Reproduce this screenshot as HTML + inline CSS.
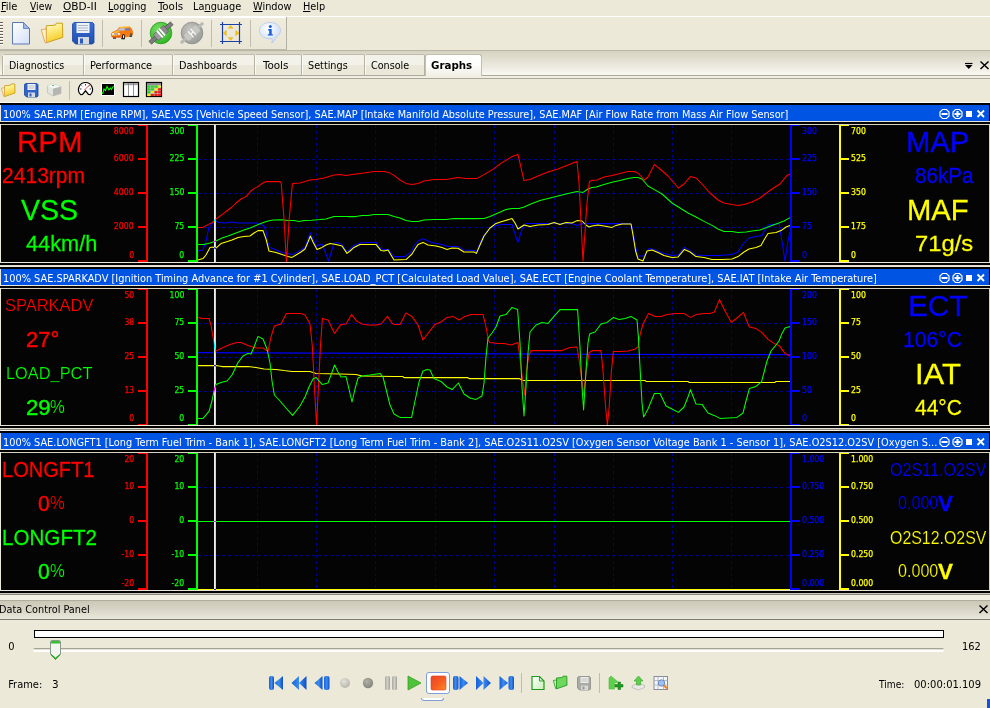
<!DOCTYPE html>
<html><head><meta charset="utf-8"><title>OBD Graphs</title>
<style>
html,body{margin:0;padding:0}
body{width:990px;height:708px;overflow:hidden;background:#ece9d8;position:relative;
 font-family:"DejaVu Sans Condensed","Liberation Sans",sans-serif;font-size:11px;color:#000;line-height:13px}
div,span,svg{position:absolute;box-sizing:border-box}
.t{white-space:nowrap;transform-origin:0 0}
u{text-decoration:underline;text-underline-offset:1px}
.red{color:#f00}.grn{color:#0f0}.blu{color:#00f}.yel{color:#ff0}
.big{white-space:nowrap;font-family:"Liberation Sans",sans-serif;transform-origin:0 0}
.ax{font-family:"DejaVu Sans Condensed","Liberation Sans",sans-serif;font-size:9px;line-height:10px;white-space:nowrap;transform:scaleX(.96);-webkit-text-stroke:.25px currentColor}
.axr{transform-origin:100% 0}.axl{transform-origin:0 0}
</style></head>
<body>
<span class="t" style="left:0.90px;top:0px;transform:scaleX(1.0000);"><u>F</u>ile</span>
<span class="t" style="left:29.88px;top:0px;transform:scaleX(0.9355);"><u>V</u>iew</span>
<span class="t" style="left:63.37px;top:0px;transform:scaleX(1.0678);"><u>O</u>BD-II</span>
<span class="t" style="left:107.62px;top:0px;transform:scaleX(0.9793);"><u>L</u>ogging</span>
<span class="t" style="left:157.80px;top:0px;transform:scaleX(1.0370);"><u>T</u>ools</span>
<span class="t" style="left:193.41px;top:0px;transform:scaleX(0.9879);">La<u>n</u>guage</span>
<span class="t" style="left:253.43px;top:0px;transform:scaleX(0.9862);"><u>W</u>indow</span>
<span class="t" style="left:302.51px;top:0px;transform:scaleX(0.9857);"><u>H</u>elp</span>
<div style="left:0;top:16px;width:990px;height:1px;background:#fff"></div>
<div style="left:0;top:17px;width:286px;height:1px;background:#fff"></div>
<div id="tb" style="left:0;top:18px;width:286px;height:31px;background:linear-gradient(#efecde,#e9e6d6)"></div>
<div style="left:286px;top:17px;width:1px;height:33px;background:#b3b0a1"></div>
<div style="left:0;top:49px;width:287px;height:1px;background:#bebbac"></div>
<div style="left:0;top:22px;width:3px;height:23px;background:repeating-linear-gradient(#6b5d4f 0 1px,#fff 1px 2px,#ece9d8 2px 3px)"></div>
<div style="left:102px;top:20px;width:1px;height:27px;background:#c0bdae"></div>
<div style="left:141px;top:20px;width:1px;height:27px;background:#c0bdae"></div>
<div style="left:211px;top:20px;width:1px;height:27px;background:#c0bdae"></div>
<div style="left:250px;top:20px;width:1px;height:27px;background:#c0bdae"></div>
<svg style="left:0;top:18px" width="290" height="31" viewBox="0 18 290 31"><defs><linearGradient id="pg" x1="0" y1="0" x2="1" y2="1"><stop offset="0" stop-color="#fff"/><stop offset="1" stop-color="#d3dff9"/></linearGradient><linearGradient id="fo" x1="0" y1="0" x2=".3" y2="1"><stop offset="0" stop-color="#fffcd8"/><stop offset=".5" stop-color="#fbe873"/><stop offset="1" stop-color="#f6cc28"/></linearGradient><linearGradient id="fl" x1="0" y1="0" x2="0" y2="1"><stop offset="0" stop-color="#3a6fd6"/><stop offset="1" stop-color="#1f4fb0"/></linearGradient><radialGradient id="gc" cx=".4" cy=".35" r=".7"><stop offset="0" stop-color="#7be067"/><stop offset="1" stop-color="#2fb324"/></radialGradient><radialGradient id="gg" cx=".4" cy=".35" r=".7"><stop offset="0" stop-color="#c4c4c0"/><stop offset="1" stop-color="#9a9a96"/></radialGradient><radialGradient id="ib" cx=".4" cy=".3" r=".8"><stop offset="0" stop-color="#fff"/><stop offset="1" stop-color="#c5d6f4"/></radialGradient></defs><path d="M12.5 22.5h11l6 6v15.5h-17z" fill="url(#pg)" stroke="#5a78b8" stroke-width="1"/><path d="M23.5 22.5v6h6z" fill="#9db6ea" stroke="#5a78b8" stroke-width=".8"/><path d="M46.300 25.800l9.100-.700 1-1.900h6.100l.300 14.200-17.100 5.500z" fill="url(#fo)" stroke="#c9a21e" stroke-width="1"/><path d="M41.200 29.600l5.100-.600v13.900l-1.300-.300z" fill="#fdf3c4" stroke="#e0a24e" stroke-width=".9"/><path d="M74 22.500h18.500l1.500 1.500v18.500l-1.500 1.500h-17l-3-3v-17z" fill="url(#fl)" stroke="#1a45a0" stroke-width=".8"/><rect x="76.500" y="23" width="13" height="10" fill="#eef1f6"/><path d="M78 25.500h10M78 28h10M78 30.500h10" stroke="#a9b4c6" stroke-width="1"/><rect x="78" y="37" width="11" height="7" fill="#d5d9e0"/><rect x="80" y="38.500" width="3" height="5" fill="#2a5cc0"/><path d="M111.100 33.600l1.300-1.700 4.800-2.100 2-2.900 10.500-.500 2.400 2.800 1 3-.300 2.700-1.700 1.400-6.100 1.300h-12.200l-1.700-1.300z" fill="#f57a14"/><path d="M117.400 30.500l2.300-2.200h5.100l-.500 2.200z" fill="#b4c8f2"/><path d="M125.500 28.500l4.700-.100-.500 1.800-3.900.400z" fill="#5a80cc"/><path d="M119.600 27.300l9.800-.400" stroke="#ffd840" stroke-width="1"/><path d="M112.800 32.200l4.400-1 3 .500-4 1z" fill="#ffe040"/><rect x="112.100" y="33.200" width="7.800" height="1.500" fill="#b4b4bc"/><rect x="112.100" y="33.200" width="1.800" height="1.500" fill="#fff"/><rect x="118.100" y="33.200" width="1.800" height="1.500" fill="#fff"/><path d="M112.300 35.500h5" stroke="#ffd840" stroke-width=".8" stroke-dasharray="1 .7"/><path d="M111.500 36l13.500 .600v1h-12.200z" fill="#e85a0c"/><ellipse cx="123.500" cy="36.600" rx="1.500" ry="2.700" fill="#111"/><ellipse cx="123.600" cy="36.500" rx=".6" ry="1.500" fill="#fff"/><ellipse cx="131.100" cy="34.900" rx="1.200" ry="2" fill="#555"/><rect x="113" y="37.600" width="3" height="1.100" fill="#222"/><rect x="121" y="38.200" width="4" height="1" fill="#222"/><rect x="129.300" y="36.300" width="2.500" height=".700" fill="#222"/><circle cx="161" cy="33" r="10.800" fill="url(#gc)" stroke="#2a9a20" stroke-width=".8"/><g transform="rotate(-42 161 33)"><rect x="146.500" y="31" width="9" height="4" fill="#7c7c7c" stroke="#4a4a4a" stroke-width=".6"/><rect x="166.500" y="31" width="9" height="4" fill="#7c7c7c" stroke="#4a4a4a" stroke-width=".6"/><rect x="154" y="29" width="6.500" height="8" rx="1.500" fill="#9c9c9c" stroke="#555" stroke-width=".6"/><rect x="161.500" y="29" width="6.500" height="8" rx="1.500" fill="#8c8c8c" stroke="#555" stroke-width=".6"/><rect x="158.500" y="28.500" width="1.800" height="9" fill="#fff"/><rect x="161.500" y="28.500" width="1.800" height="9" fill="#fff"/></g><circle cx="192" cy="33" r="10.800" fill="url(#gg)" stroke="#8c8c88" stroke-width=".8"/><g transform="rotate(-42 192 33)"><rect x="177" y="31.500" width="9" height="3" fill="#b9b9b5"/><rect x="198" y="31.500" width="9" height="3" fill="#b9b9b5"/><rect x="184" y="29" width="5" height="8" rx="1.500" fill="#c8c8c4"/><rect x="195" y="29" width="5" height="8" rx="1.500" fill="#c8c8c4"/><rect x="189.500" y="29" width="1.500" height="8" fill="#f4f4f2"/><rect x="193" y="29" width="1.500" height="8" fill="#f4f4f2"/><rect x="190" y="32.300" width="4" height="1.400" fill="#f4f4f2"/></g><path d="M220 24.500h22M220 41.500h22M222.500 22v22M239.500 22v22" stroke="#1c3fa8" stroke-width="1.200" fill="none"/><path d="M228.300 28.300h4.700l-2.400-3zM228.300 37.600h4.700l-2.400 3zM226.300 30.400v5.400l-3.300-2.700zM235.800 30.400v5.400l3.200-2.700z" fill="#f5c518" stroke="#d9a400" stroke-width=".4"/><path d="M270 22.500c6 0 10.500 3.300 10.500 8 0 3-2 5.500-5 7 0 2-1.500 4.500-4 5.500 1-1.500 1-3 .5-4.500-1 .200-1.500 .200-2 .200-6 0-10.500-3.500-10.500-8.200s4.500-8 10.500-8z" fill="url(#ib)" stroke="#b4c6e8" stroke-width=".8"/><circle cx="270.300" cy="26.400" r="1.500" fill="#1460d8"/><path d="M268.200 29h3.500v5.200h1.100v1.400h-5v-1.400h1.400v-3.800h-1z" fill="#1460d8"/></svg>
<div style="left:0;top:50px;width:990px;height:1px;background:#b9b6a6"></div>
<div style="left:0;top:51px;width:990px;height:24px;background:linear-gradient(#d6d3c2,#e6e3d6 45%,#f8f7f2)"></div>
<div style="left:0;top:75px;width:990px;height:1px;background:#aba899"></div>
<div style="left:0;top:76px;width:990px;height:2px;background:#f1efe4"></div>
<div style="left:0;top:78px;width:990px;height:1px;background:#aca899"></div>
<div style="left:2px;top:56px;width:1px;height:19px;background:#b5b2a2"></div>
<div style="left:3px;top:54px;width:81px;height:21px;border-top:1px solid #c0bdac;border-right:1px solid #b5b2a2;border-left:1px solid #fbfbf6;border-radius:2px 2px 0 0;background:linear-gradient(#f3f2e9 0 48%,#ebe8da 52%)"></div>
<span class="t" style="left:8.54px;top:59px;transform:scaleX(0.9593);">Diagnostics</span>
<div style="left:84px;top:54px;width:89px;height:21px;border-top:1px solid #c0bdac;border-right:1px solid #b5b2a2;border-left:1px solid #fbfbf6;border-radius:2px 2px 0 0;background:linear-gradient(#f3f2e9 0 48%,#ebe8da 52%)"></div>
<span class="t" style="left:89.51px;top:59px;transform:scaleX(0.9914);">Performance</span>
<div style="left:173px;top:54px;width:82px;height:21px;border-top:1px solid #c0bdac;border-right:1px solid #b5b2a2;border-left:1px solid #fbfbf6;border-radius:2px 2px 0 0;background:linear-gradient(#f3f2e9 0 48%,#ebe8da 52%)"></div>
<span class="t" style="left:178.71px;top:59px;transform:scaleX(0.9852);">Dashboards</span>
<div style="left:255px;top:54px;width:47px;height:21px;border-top:1px solid #c0bdac;border-right:1px solid #b5b2a2;border-left:1px solid #fbfbf6;border-radius:2px 2px 0 0;background:linear-gradient(#f3f2e9 0 48%,#ebe8da 52%)"></div>
<span class="t" style="left:262.60px;top:59px;transform:scaleX(1.0497);">Tools</span>
<div style="left:302px;top:54px;width:63px;height:21px;border-top:1px solid #c0bdac;border-right:1px solid #b5b2a2;border-left:1px solid #fbfbf6;border-radius:2px 2px 0 0;background:linear-gradient(#f3f2e9 0 48%,#ebe8da 52%)"></div>
<span class="t" style="left:307.99px;top:59px;transform:scaleX(0.9772);">Settings</span>
<div style="left:365px;top:54px;width:60px;height:21px;border-top:1px solid #c0bdac;border-right:1px solid #b5b2a2;border-left:1px solid #fbfbf6;border-radius:2px 2px 0 0;background:linear-gradient(#f3f2e9 0 48%,#ebe8da 52%)"></div>
<span class="t" style="left:371.21px;top:59px;transform:scaleX(0.9720);">Console</span>
<div style="left:425px;top:54px;width:57px;height:22px;border:1px solid #c2bfae;border-bottom:none;border-radius:3px 3px 0 0;background:linear-gradient(#fff,#fdfdfb 45%,#f1efe4)"></div>
<span class="t" style="left:431.48px;top:59px;transform:scaleX(1.0356);font-weight:bold;">Graphs</span>
<svg style="left:960px;top:58px" width="30" height="14" viewBox="960 58 30 14"><path d="M965 63.500h7.500" stroke="#000" stroke-width="1.200"/><path d="M965 65h7.500l-3.750 4z" fill="#000"/><path d="M980.500 61.500l8 7.500M988.500 61.500l-8 7.500" stroke="#000" stroke-width="1.500" fill="none"/></svg>
<div style="left:69px;top:81px;width:1px;height:19px;background:#c0bdae"></div>
<svg style="left:0;top:80px" width="170" height="20" viewBox="0 80 170 20"><path d="M4.500 85.800l5.800-.500.700-1.300h3.800l.200 9-10.500 3.600z" fill="url(#fo)" stroke="#c9a21e" stroke-width=".9"/><path d="M1.300 88.200l3.200-.400v8.800l-.800-.200z" fill="#fdf3c4" stroke="#e0a24e" stroke-width=".8"/><path d="M25.500 83.500h11.500l1 1v11.500l-1 1h-10.500l-2-2v-10.500z" fill="#2f62cc" stroke="#1a45a0" stroke-width=".8"/><rect x="27.500" y="84" width="8" height="6" fill="#eef1f6"/><path d="M28.500 86h6M28.500 88h6" stroke="#a9b4c6" stroke-width=".8"/><rect x="28" y="92.500" width="7" height="4.500" fill="#d5d9e0"/><rect x="29.500" y="93.500" width="2" height="3" fill="#2a5cc0"/><path d="M47.500 86l5-2 8.500 2.500v7l-8 2.500-5.500-3z" fill="#e4e4e0" stroke="#c0c0bc" stroke-width=".8"/><path d="M53 88.500l8-2v7l-8 2.500z" fill="#b5b5b1"/><path d="M47.500 86l5.500 2.500 8-2-8.500-2.500z" fill="#f6f6f4"/><rect x="52" y="85" width="2" height="1" fill="#5c6"/><path d="M85.500 82.500a7 7 0 0 1 4.800 12.100l-1.800-.100-3-3.700-3 3.700-1.800.100a7 7 0 0 1 4.800-12.100z" fill="#fff" stroke="#000" stroke-width="1.200"/><path d="M80 89h1.500M85.500 84v1.500M89.500 85.500l-.8.800M81.500 85.500l.8.800M91 89h-1.500" stroke="#000" stroke-width=".8"/><path d="M84.500 90l5.500-5.500" stroke="#f03020" stroke-width=".9"/><rect x="101" y="83" width="14" height="13" fill="#fff"/><rect x="102" y="84" width="12" height="11" fill="#000"/><path d="M102.500 94l1.500-5 1.500 1.500 1.500-4 2 3.500 1.500-2 1 1.500 2-3.500" stroke="#0f0" stroke-width="1.100" fill="none"/><rect x="123.500" y="82.500" width="15" height="14" fill="#fff" stroke="#000" stroke-width="1.200"/><rect x="124" y="83" width="14" height="2.200" fill="#a4a4a4"/><path d="M128.500 83v13M133.500 83v13" stroke="#777" stroke-width=".8"/><rect x="146.500" y="82.500" width="15" height="14" fill="#bbb" stroke="#000" stroke-width="1.200"/><rect x="147" y="83" width="14" height="2" fill="#8a8a90"/><rect x="147.3" y="85.5" width="3" height="2.200" fill="#1fdc1f"/><rect x="150.9" y="85.5" width="3" height="2.200" fill="#1fdc1f"/><rect x="154.5" y="85.5" width="3" height="2.200" fill="#1fdc1f"/><rect x="158.1" y="85.5" width="3" height="2.200" fill="#f7ee10"/><rect x="147.3" y="88.3" width="3" height="2.200" fill="#1fdc1f"/><rect x="150.9" y="88.3" width="3" height="2.200" fill="#1fdc1f"/><rect x="154.5" y="88.3" width="3" height="2.200" fill="#f7ee10"/><rect x="158.1" y="88.3" width="3" height="2.200" fill="#f01818"/><rect x="147.3" y="91.1" width="3" height="2.200" fill="#1fdc1f"/><rect x="150.9" y="91.1" width="3" height="2.200" fill="#f7ee10"/><rect x="154.5" y="91.1" width="3" height="2.200" fill="#f01818"/><rect x="158.1" y="91.1" width="3" height="2.200" fill="#f01818"/><rect x="147.3" y="93.9" width="3" height="2.200" fill="#f7ee10"/><rect x="150.9" y="93.9" width="3" height="2.200" fill="#f01818"/><rect x="154.5" y="93.9" width="3" height="2.200" fill="#f01818"/><rect x="158.1" y="93.9" width="3" height="2.200" fill="#f01818"/></svg>
<div style="left:0;top:102px;width:990px;height:1px;background:#fbfaf4"></div>
<div style="left:0;top:103px;width:990px;height:2px;background:#000"></div>
<div style="left:1px;top:105px;width:988px;height:16px;background:#0054e3"></div>
<div style="left:989px;top:105px;width:1px;height:16px;background:#000"></div>
<span class="t" style="left:2.89px;top:108px;transform:scaleX(0.9832);color:#fff;">100% SAE.RPM [Engine RPM], SAE.VSS [Vehicle Speed Sensor], SAE.MAP [Intake Manifold Absolute Pressure], SAE.MAF [Air Flow Rate from Mass Air Flow Sensor]</span>
<svg style="left:936px;top:105px" width="52" height="16" viewBox="0 0 52 16"><g fill="none" stroke="#fff" stroke-width="1.2"><path d="M6.5 4.5h4l2.5 2.5v4l-2.5 2.5h-4l-2.5-2.5v-4z"/><path d="M19.5 4.5h4l2.5 2.5v4l-2.5 2.5h-4l-2.5-2.5v-4z"/></g><g fill="#fff"><rect x="5.5" y="8" width="6" height="2"/><rect x="18.5" y="8" width="6" height="2"/><rect x="20.5" y="6" width="2" height="6"/><rect x="30" y="6" width="6" height="6"/></g><path d="M41.5 5.5l6.5 6.5M48 5.5l-6.5 6.5" stroke="#fff" stroke-width="1.8" fill="none"/></svg>
<div style="left:0;top:121px;width:990px;height:1px;background:#e8e5d6"></div>
<div style="left:0;top:122px;width:990px;height:2px;background:#000"></div>
<div style="left:1px;top:124px;width:989px;height:1px;background:#d6d2c0"></div>
<div style="left:1px;top:125px;width:988px;height:137px;background:#040404"></div>
<div style="left:989px;top:125px;width:1px;height:137px;background:#d6d2c0"></div>
<div style="left:0;top:262px;width:990px;height:1px;background:#e8e5d6"></div>
<div style="left:0;top:263px;width:990px;height:2px;background:#000"></div>
<div style="left:0;top:265px;width:990px;height:2px;background:linear-gradient(#d6d2c0,#f4f2e8)"></div>
<svg style="left:1px;top:125px" width="988" height="137" viewBox="1 125 988 137" shape-rendering="crispEdges"><path d="M257.5 125V262M316.5 125V262M375.5 125V262M435.5 125V262M494.5 125V262M554.5 125V262M613.5 125V262M672.5 125V262M731.5 125V262M198 159.5H790M198 193.5H790M198 227.5H790" stroke="#000088" stroke-width="1" stroke-dasharray="3 3" fill="none"/><path d="M147 125V262M138 125H146M138 159H146M138 193H146M138 227H146M138 261H146" stroke="#f00" stroke-width="2" fill="none"/><path d="M197 125V262M188 125H196M188 159H196M188 193H196M188 227H196M188 261H196" stroke="#0f0" stroke-width="2" fill="none"/><path d="M791 125V262M792 125H800M792 159H800M792 193H800M792 227H800M792 261H800" stroke="#00f" stroke-width="2" fill="none"/><path d="M840 125V262M841 125H849M841 159H849M841 193H849M841 227H849M841 261H849" stroke="#ff0" stroke-width="2" fill="none"/><g shape-rendering="auto" fill="none" stroke-width="1.05" stroke-linejoin="round"><path d="M198.0 251.0L203.0 250.0L206.0 241.0L209.0 227.0L212.0 224.0L215.4 221.0L219.0 222.6L226.0 223.0L232.0 222.0L238.0 223.0L246.0 223.0L256.0 223.0L260.0 224.0L264.0 226.0L266.0 231.0L268.0 243.0L270.0 247.4L276.0 250.0L282.0 252.6L288.0 253.4L292.0 254.6L296.0 252.6L301.0 250.0L305.0 247.0L308.0 239.0L310.4 232.6L313.0 239.0L316.0 246.0L322.0 244.0L325.0 251.0L328.4 261.0L331.0 253.0L334.0 243.0L338.0 242.6L342.0 244.6L347.0 252.0L350.0 249.0L354.0 245.4L360.0 243.0L368.0 242.4L376.0 242.4L381.0 249.0L384.0 249.6L388.0 249.4L394.0 256.6L405.0 256.6L411.0 252.0L414.0 246.0L418.0 241.0L423.0 238.6L428.0 241.0L434.0 243.0L442.0 244.6L448.0 246.4L458.0 246.6L464.0 250.0L474.0 250.6L477.0 252.0L480.0 243.0L484.0 235.0L490.0 228.0L496.0 225.4L502.0 224.6L512.0 224.4L514.0 231.0L518.0 242.4L522.0 229.0L526.0 223.4L538.0 223.4L554.0 223.4L564.0 223.6L572.0 223.6L577.0 225.4L582.0 223.6L592.0 223.6L604.0 223.6L612.0 223.6L622.0 223.6L631.0 223.6L633.0 231.0L635.0 243.0L637.6 256.0L644.0 256.0L649.0 248.6L654.0 249.4L662.0 253.0L672.0 255.4L678.0 255.0L684.4 247.4L690.0 250.6L696.0 255.0L706.0 255.4L720.0 255.4L732.0 254.4L738.0 252.0L743.0 244.0L749.0 238.0L756.0 236.6L762.0 235.4L764.4 231.0L768.0 225.0L776.0 224.0L779.0 223.4L781.0 235.0L785.0 261.0L787.6 243.0L790.0 232.0" stroke="#0000ff"/><path d="M198.0 260.0L203.0 258.6L206.0 255.0L210.0 247.4L213.0 247.0L215.4 248.6L221.0 243.6L226.0 242.0L232.0 240.0L238.0 237.4L244.0 236.6L250.0 236.0L254.0 233.0L258.0 230.6L263.0 230.6L266.0 239.0L269.0 251.0L276.0 252.6L282.0 254.6L288.0 256.6L292.0 257.4L296.0 255.0L301.0 252.0L305.0 249.0L308.0 242.0L310.4 236.0L313.0 242.0L317.0 249.4L322.0 247.4L326.0 245.0L330.0 243.6L336.0 244.6L342.0 246.0L347.0 253.4L350.0 251.0L354.0 247.4L360.0 244.6L368.0 244.4L376.0 244.4L381.0 250.6L384.0 251.0L388.0 250.0L394.0 260.0L406.0 259.6L412.0 254.0L415.0 249.0L418.0 244.6L423.0 242.4L428.0 245.0L436.0 246.0L442.0 247.6L447.0 249.4L452.0 248.0L458.0 248.2L464.0 252.0L474.0 252.0L476.4 253.4L480.0 245.0L484.0 236.0L490.0 228.0L496.0 223.4L502.0 221.4L512.0 218.6L515.0 223.0L518.0 229.0L524.0 225.0L530.0 226.6L538.0 225.0L548.0 224.6L554.0 222.4L560.0 224.4L566.0 222.6L572.0 223.0L577.0 220.6L582.0 221.0L586.0 225.0L589.0 227.0L592.0 226.0L598.0 225.0L604.0 226.0L612.0 227.4L616.0 225.4L622.0 224.0L631.0 224.0L633.0 235.0L635.6 251.0L638.0 259.0L643.0 261.0L647.0 251.0L652.0 250.0L658.0 252.6L664.0 255.4L672.0 257.4L678.0 257.0L684.4 249.4L690.0 252.0L696.0 256.6L704.0 257.4L712.0 259.4L722.0 259.4L732.0 259.0L738.0 256.6L744.0 252.0L749.0 249.0L756.0 247.4L761.0 245.4L764.0 240.0L768.0 233.4L776.0 232.6L781.0 230.6L786.0 227.0L790.0 225.4" stroke="#ffff00"/><path d="M198.0 244.4L204.0 244.4L210.0 243.0L216.0 241.0L222.0 238.0L228.0 236.0L236.0 233.0L244.0 230.0L250.0 228.0L256.0 225.4L262.0 223.0L268.0 221.0L273.0 220.0L282.0 219.8L288.0 220.6L294.0 220.4L299.0 221.4L304.0 220.4L312.0 220.2L320.0 219.6L326.0 219.0L334.0 216.6L340.0 216.4L348.0 216.6L356.0 216.6L362.0 215.6L368.0 215.4L374.0 214.6L382.0 214.4L388.0 214.6L394.0 216.4L400.0 218.0L406.0 220.6L412.0 221.6L418.0 221.4L424.0 220.0L434.0 219.4L446.0 219.4L454.0 218.6L474.0 218.6L484.0 218.4L490.0 216.4L498.0 213.0L506.0 209.4L512.0 208.6L519.0 208.4L524.0 207.0L532.0 203.4L540.0 200.6L548.0 198.6L558.0 196.0L568.0 193.4L577.0 191.4L583.0 192.4L588.0 189.0L592.0 187.4L596.0 187.0L604.0 184.6L612.0 182.2L620.0 180.6L628.0 178.6L634.0 177.6L638.0 177.4L642.0 179.0L648.0 186.0L654.0 189.4L662.0 194.0L672.0 203.0L680.0 208.0L688.0 213.0L696.0 217.0L704.0 221.4L712.0 225.4L718.0 229.0L724.0 231.4L732.0 231.6L738.0 232.4L746.0 232.0L752.0 231.0L760.0 230.0L768.0 227.0L776.0 224.0L784.0 221.0L790.0 217.6" stroke="#00ff00"/><path d="M198.0 227.4L203.0 227.4L208.0 224.6L212.0 222.6L216.0 219.0L222.0 214.6L228.0 210.0L232.0 207.0L236.0 203.0L241.0 199.0L246.0 196.6L251.0 191.0L254.0 188.6L258.0 186.6L262.0 183.4L266.0 181.6L280.0 181.6L281.2 183.0L284.0 219.0L286.4 262.0L289.2 219.0L292.4 183.6L300.0 183.0L305.0 181.6L310.0 180.0L316.0 179.4L324.0 178.0L334.0 175.0L340.0 174.6L346.0 175.6L354.0 174.2L364.0 173.0L374.0 171.4L384.0 171.4L389.0 172.6L394.0 175.4L400.0 180.0L406.0 183.4L412.0 184.6L418.0 183.4L424.0 181.0L434.0 179.4L446.0 179.4L458.0 177.4L466.0 178.6L477.0 178.4L484.0 174.6L494.0 168.6L502.0 162.6L512.0 156.6L518.0 154.6L524.0 180.6L530.0 179.4L538.0 176.0L548.0 172.0L558.0 169.0L568.0 165.0L577.0 161.4L579.0 183.0L583.0 261.0L587.0 203.0L589.4 181.6L592.0 180.6L597.0 180.0L604.0 177.0L612.0 175.4L620.0 173.4L628.0 171.4L634.0 171.4L638.0 173.0L644.4 180.0L648.0 177.0L654.4 164.6L660.0 169.0L668.0 176.0L674.0 183.0L678.4 188.0L684.0 184.0L690.4 176.6L696.0 178.0L702.0 184.0L710.0 193.0L718.0 200.0L724.0 203.0L732.0 204.6L738.0 205.4L744.0 204.4L752.0 202.0L760.0 198.0L766.0 193.4L772.0 189.0L780.0 184.0L787.0 175.4L790.0 174.0" stroke="#ff0000"/></g><rect x="214" y="125" width="1" height="137" fill="#f4f4f4" style="mix-blend-mode:difference"/><rect x="215" y="125" width="1" height="137" fill="#d8d6d0" style="mix-blend-mode:difference"/></svg>
<span class="ax axr red" style="right:856px;top:126.0px">8000</span>
<span class="ax axr red" style="right:856px;top:153.0px">6000</span>
<span class="ax axr red" style="right:856px;top:187.0px">4000</span>
<span class="ax axr red" style="right:856px;top:221.0px">2000</span>
<span class="ax axr red" style="right:856px;top:250.0px">0</span>
<span class="ax axr grn" style="right:806px;top:126.0px">300</span>
<span class="ax axr grn" style="right:806px;top:153.0px">225</span>
<span class="ax axr grn" style="right:806px;top:187.0px">150</span>
<span class="ax axr grn" style="right:806px;top:221.0px">75</span>
<span class="ax axr grn" style="right:806px;top:250.0px">0</span>
<span class="ax axl blu" style="left:802.3px;top:126.0px">300</span>
<span class="ax axl blu" style="left:802.3px;top:153.0px">225</span>
<span class="ax axl blu" style="left:802.3px;top:187.0px">150</span>
<span class="ax axl blu" style="left:802.3px;top:221.0px">75</span>
<span class="ax axl blu" style="left:802.3px;top:250.0px">0</span>
<span class="ax axl yel" style="left:851.3px;top:126.0px">700</span>
<span class="ax axl yel" style="left:851.3px;top:153.0px">525</span>
<span class="ax axl yel" style="left:851.3px;top:187.0px">350</span>
<span class="ax axl yel" style="left:851.3px;top:221.0px">175</span>
<span class="ax axl yel" style="left:851.3px;top:250.0px">0</span>
<span class="big red" style="left:17.39px;top:128.00px;font-size:29px;line-height:29px;-webkit-text-stroke:0.25px currentColor;transform-origin:0 24px;transform:scale(1.0147,1.045)">RPM</span>
<span class="big red" style="left:1.80px;top:165.00px;font-size:21px;line-height:21px;-webkit-text-stroke:0.25px currentColor;transform-origin:0 18px;transform:scale(1.0025,1.045)">2413rpm</span>
<span class="big grn" style="left:20.78px;top:196.00px;font-size:29px;line-height:29px;-webkit-text-stroke:0.25px currentColor;transform-origin:0 24px;transform:scale(0.9854,1.045)">VSS</span>
<span class="big grn" style="left:26.38px;top:233.00px;font-size:21px;line-height:21px;-webkit-text-stroke:0.25px currentColor;transform-origin:0 18px;transform:scale(1.0354,1.045)">44km/h</span>
<span class="big blu" style="left:906.11px;top:128.00px;font-size:29px;line-height:29px;-webkit-text-stroke:0.25px currentColor;transform-origin:0 24px;transform:scale(1.0068,1.045)">MAP</span>
<span class="big blu" style="left:915.04px;top:165.00px;font-size:21px;line-height:21px;-webkit-text-stroke:0.25px currentColor;transform-origin:0 18px;transform:scale(0.9821,1.045)">86kPa</span>
<span class="big yel" style="left:907.31px;top:196.00px;font-size:29px;line-height:29px;-webkit-text-stroke:0.25px currentColor;transform-origin:0 24px;transform:scale(1.0078,1.045)">MAF</span>
<span class="big yel" style="left:914.63px;top:233.00px;font-size:21px;line-height:21px;-webkit-text-stroke:0.25px currentColor;transform-origin:0 18px;transform:scale(1.1313,1.045)">71g/s</span>
<div style="left:0;top:267px;width:990px;height:2px;background:#000"></div>
<div style="left:1px;top:269px;width:988px;height:16px;background:#0054e3"></div>
<div style="left:989px;top:269px;width:1px;height:16px;background:#000"></div>
<span class="t" style="left:2.89px;top:272px;transform:scaleX(0.9896);color:#fff;">100% SAE.SPARKADV [Ignition Timing Advance for #1 Cylinder], SAE.LOAD_PCT [Calculated Load Value], SAE.ECT [Engine Coolant Temperature], SAE.IAT [Intake Air Temperature]</span>
<svg style="left:936px;top:269px" width="52" height="16" viewBox="0 0 52 16"><g fill="none" stroke="#fff" stroke-width="1.2"><path d="M6.5 4.5h4l2.5 2.5v4l-2.5 2.5h-4l-2.5-2.5v-4z"/><path d="M19.5 4.5h4l2.5 2.5v4l-2.5 2.5h-4l-2.5-2.5v-4z"/></g><g fill="#fff"><rect x="5.5" y="8" width="6" height="2"/><rect x="18.5" y="8" width="6" height="2"/><rect x="20.5" y="6" width="2" height="6"/><rect x="30" y="6" width="6" height="6"/></g><path d="M41.5 5.5l6.5 6.5M48 5.5l-6.5 6.5" stroke="#fff" stroke-width="1.8" fill="none"/></svg>
<div style="left:0;top:285px;width:990px;height:1px;background:#e8e5d6"></div>
<div style="left:0;top:286px;width:990px;height:2px;background:#000"></div>
<div style="left:1px;top:288px;width:989px;height:1px;background:#d6d2c0"></div>
<div style="left:1px;top:289px;width:988px;height:136px;background:#040404"></div>
<div style="left:989px;top:289px;width:1px;height:136px;background:#d6d2c0"></div>
<div style="left:0;top:425px;width:990px;height:1px;background:#e8e5d6"></div>
<div style="left:0;top:426px;width:990px;height:2px;background:#000"></div>
<div style="left:0;top:428px;width:990px;height:3px;background:linear-gradient(#e4e1d2 0 1px,#8c8a80 1px 2px,#f4f2e8 2px)"></div>
<svg style="left:1px;top:289px" width="988" height="136" viewBox="1 289 988 136" shape-rendering="crispEdges"><path d="M257.5 289V425M316.5 289V425M375.5 289V425M435.5 289V425M494.5 289V425M554.5 289V425M613.5 289V425M672.5 289V425M731.5 289V425M198 323.5H790M198 357.5H790M198 391.5H790" stroke="#000088" stroke-width="1" stroke-dasharray="3 3" fill="none"/><path d="M147 289V425M138 289H146M138 323H146M138 357H146M138 391H146M138 425H146" stroke="#f00" stroke-width="2" fill="none"/><path d="M197 289V425M188 289H196M188 323H196M188 357H196M188 391H196M188 425H196" stroke="#0f0" stroke-width="2" fill="none"/><path d="M791 289V425M792 289H800M792 323H800M792 357H800M792 391H800M792 425H800" stroke="#00f" stroke-width="2" fill="none"/><path d="M840 289V425M841 289H849M841 323H849M841 357H849M841 391H849M841 425H849" stroke="#ff0" stroke-width="2" fill="none"/><g shape-rendering="auto" fill="none" stroke-width="1.05" stroke-linejoin="round"><path d="M198.0 365.6L216.0 365.6L222.0 366.6L248.0 366.6L256.0 367.6L264.0 369.0L276.0 369.4L284.0 370.6L292.0 371.4L310.0 371.6L316.0 373.4L340.0 374.0L356.0 374.4L362.0 376.0L394.0 376.4L403.0 376.6L404.0 377.6L468.0 377.6L469.0 378.6L519.0 378.6L523.0 380.4L592.0 380.4L645.0 380.4L646.0 381.4L688.0 381.4L689.0 382.4L775.0 382.4L776.0 381.4L790.0 381.4" stroke="#ffff00"/><path d="M198.0 352.6L394.0 353.4L592.0 354.4L790.0 354.6" stroke="#0000ff" stroke-width="1.25"/><path d="M198.0 317.4L202.0 318.4L209.0 318.4L211.0 325.0L214.0 343.0L215.4 351.4L222.0 348.0L230.0 344.6L237.0 342.4L241.0 342.6L248.0 345.4L256.0 348.0L263.0 348.0L268.0 351.4L271.0 337.0L274.4 326.0L281.0 324.0L286.4 313.4L301.0 313.4L305.0 315.0L310.0 324.0L312.4 347.0L314.4 387.0L316.6 425.0L318.4 387.0L320.4 347.0L322.4 318.4L328.0 320.0L334.6 333.4L341.0 324.4L346.0 324.0L351.6 314.6L357.0 321.4L362.0 324.0L368.0 325.0L376.0 325.0L381.0 324.0L387.4 316.4L392.0 323.0L394.0 324.4L400.0 324.4L406.0 313.0L412.0 316.6L418.0 325.0L423.0 340.0L429.0 332.0L435.0 324.4L441.0 322.0L447.0 317.4L453.0 316.4L459.0 320.0L465.0 316.4L471.0 314.4L483.0 314.4L486.0 327.0L488.4 340.0L490.0 342.6L498.0 343.4L504.0 343.4L511.0 345.0L518.0 342.6L520.0 359.0L523.0 383.0L524.6 395.0L526.4 371.0L529.0 355.0L531.0 350.6L562.0 350.6L570.0 347.4L577.0 347.0L579.0 359.0L582.0 381.0L583.6 395.0L586.0 373.0L589.0 353.0L592.0 350.6L601.0 350.6L603.0 371.0L605.6 407.0L607.4 425.0L609.2 407.0L611.4 371.0L613.4 351.4L620.0 351.4L628.0 351.0L634.0 349.6L638.0 347.0L640.0 335.0L643.0 324.0L648.6 313.4L655.0 316.4L661.0 316.4L667.0 314.4L676.0 313.4L684.0 313.4L690.4 317.4L696.0 314.6L704.0 313.4L710.0 313.4L714.4 312.0L719.4 299.6L725.0 311.0L731.4 322.4L737.0 318.0L743.4 312.4L746.4 320.0L749.4 327.0L756.0 328.6L762.0 332.6L768.0 339.4L774.0 343.4L779.0 345.4L785.0 353.4L790.0 356.0" stroke="#ff0000"/><path d="M198.0 418.4L203.0 418.4L209.0 411.4L212.0 401.0L214.0 391.0L216.0 384.4L221.0 382.4L227.0 381.0L232.0 375.0L238.0 362.6L243.0 356.0L248.0 353.4L251.0 354.0L254.0 347.0L258.0 336.4L263.0 339.0L267.0 349.0L270.0 363.0L272.0 381.0L274.4 395.0L280.0 401.0L286.0 408.0L292.6 415.4L300.0 406.0L305.0 397.0L309.0 387.0L313.0 379.0L316.0 377.4L322.0 384.4L328.0 383.0L331.0 375.0L334.6 365.0L338.0 372.0L341.0 377.0L346.0 376.6L349.0 389.0L352.0 402.0L355.0 389.0L358.0 378.0L362.0 376.0L370.0 375.0L380.0 373.4L383.0 377.0L386.0 389.0L390.0 405.0L394.0 414.0L400.0 417.4L411.6 417.4L415.0 401.0L419.0 382.0L423.0 371.0L427.0 369.4L430.0 370.0L434.0 378.6L441.0 381.4L447.0 387.0L452.4 389.4L458.4 383.0L464.0 394.0L470.0 398.0L476.0 399.4L482.0 396.0L484.0 383.0L486.0 357.0L488.0 338.0L492.0 333.0L496.0 327.0L500.0 316.0L506.0 314.6L512.0 307.4L517.6 309.4L520.0 343.0L522.0 387.0L524.0 416.0L526.0 387.0L528.0 353.0L530.0 332.0L536.0 325.0L542.0 322.4L548.0 323.4L554.0 316.4L560.0 309.6L577.6 309.6L580.0 347.0L582.0 387.0L583.6 410.0L585.6 377.0L588.0 343.0L589.6 334.0L592.0 333.0L595.0 332.0L601.0 324.0L607.0 322.4L613.4 317.4L619.0 319.4L625.0 318.4L631.0 316.4L637.0 320.0L638.4 337.0L640.0 367.0L642.0 403.0L643.6 417.0L648.0 409.0L654.4 393.4L660.0 393.4L666.0 406.0L672.0 409.0L678.4 412.4L684.0 407.0L688.0 397.0L690.4 389.6L696.0 404.0L702.0 404.4L708.0 413.0L714.0 415.4L720.0 418.4L737.0 417.4L743.0 413.0L746.0 401.0L749.4 388.6L756.0 386.4L761.6 381.6L764.4 371.0L767.0 361.0L771.0 351.0L776.0 345.0L779.0 341.0L782.0 333.4L785.0 328.0L790.0 326.4" stroke="#00ff00"/></g><rect x="214" y="289" width="1" height="136" fill="#f4f4f4" style="mix-blend-mode:difference"/><rect x="215" y="289" width="1" height="136" fill="#d8d6d0" style="mix-blend-mode:difference"/></svg>
<span class="ax axr red" style="right:856px;top:290.0px">50</span>
<span class="ax axr red" style="right:856px;top:317.0px">38</span>
<span class="ax axr red" style="right:856px;top:351.0px">25</span>
<span class="ax axr red" style="right:856px;top:385.0px">13</span>
<span class="ax axr red" style="right:856px;top:413.0px">0</span>
<span class="ax axr grn" style="right:806px;top:290.0px">100</span>
<span class="ax axr grn" style="right:806px;top:317.0px">75</span>
<span class="ax axr grn" style="right:806px;top:351.0px">50</span>
<span class="ax axr grn" style="right:806px;top:385.0px">25</span>
<span class="ax axr grn" style="right:806px;top:413.0px">0</span>
<span class="ax axl blu" style="left:802.3px;top:290.0px">200</span>
<span class="ax axl blu" style="left:802.3px;top:317.0px">150</span>
<span class="ax axl blu" style="left:802.3px;top:351.0px">100</span>
<span class="ax axl blu" style="left:802.3px;top:385.0px">50</span>
<span class="ax axl blu" style="left:802.3px;top:413.0px">0</span>
<span class="ax axl yel" style="left:851.3px;top:290.0px">100</span>
<span class="ax axl yel" style="left:851.3px;top:317.0px">75</span>
<span class="ax axl yel" style="left:851.3px;top:351.0px">50</span>
<span class="ax axl yel" style="left:851.3px;top:385.0px">25</span>
<span class="ax axl yel" style="left:851.3px;top:413.0px">0</span>
<span class="big red" style="left:4.93px;top:298.00px;font-size:16px;line-height:16px;-webkit-text-stroke:0.2px #040404;transform-origin:0 13px;transform:scale(1.0291,1.045)">SPARKADV</span>
<span class="big red" style="left:25.55px;top:329.00px;font-size:21px;line-height:21px;-webkit-text-stroke:0.4px currentColor;transform-origin:0 18px;transform:scale(1.0475,1.045)">27°</span>
<span class="big grn" style="left:6.12px;top:366.00px;font-size:16px;line-height:16px;-webkit-text-stroke:0.2px #040404;transform-origin:0 13px;transform:scale(1.0232,1.045)">LOAD_PCT</span>
<span class="big grn" style="left:25.54px;top:397.00px;font-size:21px;line-height:21px;-webkit-text-stroke:0.4px currentColor;transform-origin:0 18px;transform:scale(1.0573,1.045)">29</span>
<span class="big grn" style="left:50.09px;top:399.00px;font-size:17px;line-height:17px;-webkit-text-stroke:0.2px #040404;transform-origin:0 14px;transform:scale(0.9802,1.045)">%</span>
<span class="big blu" style="left:908.36px;top:292.00px;font-size:29px;line-height:29px;-webkit-text-stroke:0.25px currentColor;transform-origin:0 24px;transform:scale(1.0260,1.045)">ECT</span>
<span class="big blu" style="left:903.26px;top:329.00px;font-size:21px;line-height:21px;-webkit-text-stroke:0.25px currentColor;transform-origin:0 18px;transform:scale(1.0062,1.045)">106°C</span>
<span class="big yel" style="left:914.79px;top:360.00px;font-size:29px;line-height:29px;-webkit-text-stroke:0.25px currentColor;transform-origin:0 24px;transform:scale(1.0700,1.045)">IAT</span>
<span class="big yel" style="left:915.40px;top:397.00px;font-size:21px;line-height:21px;-webkit-text-stroke:0.25px currentColor;transform-origin:0 18px;transform:scale(0.9995,1.045)">44°C</span>
<div style="left:0;top:431px;width:990px;height:2px;background:#000"></div>
<div style="left:1px;top:433px;width:988px;height:16px;background:#0054e3"></div>
<div style="left:989px;top:433px;width:1px;height:16px;background:#000"></div>
<span class="t" style="left:2.89px;top:436px;transform:scaleX(0.9872);color:#fff;">100% SAE.LONGFT1 [Long Term Fuel Trim - Bank 1], SAE.LONGFT2 [Long Term Fuel Trim - Bank 2], SAE.O2S11.O2SV [Oxygen Sensor Voltage Bank 1 - Sensor 1], SAE.O2S12.O2SV [Oxygen S...</span>
<svg style="left:936px;top:433px" width="52" height="16" viewBox="0 0 52 16"><g fill="none" stroke="#fff" stroke-width="1.2"><path d="M6.5 4.5h4l2.5 2.5v4l-2.5 2.5h-4l-2.5-2.5v-4z"/><path d="M19.5 4.5h4l2.5 2.5v4l-2.5 2.5h-4l-2.5-2.5v-4z"/></g><g fill="#fff"><rect x="5.5" y="8" width="6" height="2"/><rect x="18.5" y="8" width="6" height="2"/><rect x="20.5" y="6" width="2" height="6"/><rect x="30" y="6" width="6" height="6"/></g><path d="M41.5 5.5l6.5 6.5M48 5.5l-6.5 6.5" stroke="#fff" stroke-width="1.8" fill="none"/></svg>
<div style="left:0;top:449px;width:990px;height:1px;background:#e8e5d6"></div>
<div style="left:0;top:450px;width:990px;height:2px;background:#000"></div>
<div style="left:1px;top:452px;width:989px;height:1px;background:#d6d2c0"></div>
<div style="left:1px;top:453px;width:988px;height:137px;background:#040404"></div>
<div style="left:989px;top:453px;width:1px;height:137px;background:#d6d2c0"></div>
<div style="left:0;top:590px;width:990px;height:1px;background:#e8e5d6"></div>
<div style="left:0;top:591px;width:990px;height:2px;background:#000"></div>
<svg style="left:1px;top:453px" width="988" height="137" viewBox="1 453 988 137" shape-rendering="crispEdges"><path d="M257.5 453V590M316.5 453V590M375.5 453V590M435.5 453V590M494.5 453V590M554.5 453V590M613.5 453V590M672.5 453V590M731.5 453V590M198 487.5H790M198 521.5H790M198 555.5H790" stroke="#000088" stroke-width="1" stroke-dasharray="3 3" fill="none"/><path d="M147 453V590M138 453H146M138 487H146M138 521H146M138 555H146M138 589H146" stroke="#f00" stroke-width="2" fill="none"/><path d="M197 453V590M188 453H196M188 487H196M188 521H196M188 555H196M188 589H196" stroke="#0f0" stroke-width="2" fill="none"/><path d="M791 453V590M792 453H800M792 487H800M792 521H800M792 555H800M792 589H800" stroke="#00f" stroke-width="2" fill="none"/><path d="M840 453V590M841 453H849M841 487H849M841 521H849M841 555H849M841 589H849" stroke="#ff0" stroke-width="2" fill="none"/><g shape-rendering="auto" fill="none" stroke-width="1.05" stroke-linejoin="round"><path d="M198.0 589.5L790.0 589.5" stroke="#ffff00"/><path d="M198.0 521.5L790.0 521.5" stroke="#00ff00"/></g><rect x="214" y="453" width="1" height="137" fill="#f4f4f4" style="mix-blend-mode:difference"/><rect x="215" y="453" width="1" height="137" fill="#d8d6d0" style="mix-blend-mode:difference"/></svg>
<span class="ax axr red" style="right:856px;top:454.0px">20</span>
<span class="ax axr red" style="right:856px;top:481.0px">10</span>
<span class="ax axr red" style="right:856px;top:515.0px">0</span>
<span class="ax axr red" style="right:856px;top:549.0px">-10</span>
<span class="ax axr red" style="right:856px;top:578.0px">-20</span>
<span class="ax axr grn" style="right:806px;top:454.0px">20</span>
<span class="ax axr grn" style="right:806px;top:481.0px">10</span>
<span class="ax axr grn" style="right:806px;top:515.0px">0</span>
<span class="ax axr grn" style="right:806px;top:549.0px">-10</span>
<span class="ax axr grn" style="right:806px;top:578.0px">-20</span>
<span class="ax axl blu" style="left:802.3px;top:454.0px">1.000</span>
<span class="ax axl blu" style="left:802.3px;top:481.0px">0.750</span>
<span class="ax axl blu" style="left:802.3px;top:515.0px">0.500</span>
<span class="ax axl blu" style="left:802.3px;top:549.0px">0.250</span>
<span class="ax axl blu" style="left:802.3px;top:578.0px">0.000</span>
<span class="ax axl yel" style="left:851.3px;top:454.0px">1.000</span>
<span class="ax axl yel" style="left:851.3px;top:481.0px">0.750</span>
<span class="ax axl yel" style="left:851.3px;top:515.0px">0.500</span>
<span class="ax axl yel" style="left:851.3px;top:549.0px">0.250</span>
<span class="ax axl yel" style="left:851.3px;top:578.0px">0.000</span>
<span class="big red" style="left:2.33px;top:459.00px;font-size:21px;line-height:21px;-webkit-text-stroke:0.25px currentColor;transform-origin:0 18px;transform:scale(0.9543,1.045)">LONGFT1</span>
<span class="big red" style="left:38.24px;top:493.00px;font-size:21px;line-height:21px;-webkit-text-stroke:0.4px currentColor;transform-origin:0 18px;transform:scale(1.0074,1.045)">0</span>
<span class="big red" style="left:50.09px;top:495.00px;font-size:17px;line-height:17px;-webkit-text-stroke:0.2px #040404;transform-origin:0 14px;transform:scale(0.9802,1.045)">%</span>
<span class="big grn" style="left:2.28px;top:527.00px;font-size:21px;line-height:21px;-webkit-text-stroke:0.25px currentColor;transform-origin:0 18px;transform:scale(0.9809,1.045)">LONGFT2</span>
<span class="big grn" style="left:38.24px;top:561.00px;font-size:21px;line-height:21px;-webkit-text-stroke:0.4px currentColor;transform-origin:0 18px;transform:scale(1.0074,1.045)">0</span>
<span class="big grn" style="left:50.09px;top:563.00px;font-size:17px;line-height:17px;-webkit-text-stroke:0.2px #040404;transform-origin:0 14px;transform:scale(0.9802,1.045)">%</span>
<span class="big blu" style="left:889.69px;top:462.00px;font-size:17px;line-height:17px;-webkit-text-stroke:0.2px #040404;transform-origin:0 14px;transform:scale(0.9477,1.045)">O2S11.O2SV</span>
<span class="big blu" style="left:898.01px;top:495.00px;font-size:17px;line-height:17px;-webkit-text-stroke:0.2px #040404;transform-origin:0 14px;transform:scale(0.9479,1.045)">0.000</span>
<span class="big blu" style="left:938.07px;top:493.00px;font-size:21px;line-height:21px;font-weight:bold;-webkit-text-stroke:0.25px currentColor;transform-origin:0 18px;transform:scale(1.0691,1.045)">V</span>
<span class="big yel" style="left:889.70px;top:530.00px;font-size:17px;line-height:17px;-webkit-text-stroke:0.2px #040404;transform-origin:0 14px;transform:scale(0.9361,1.045)">O2S12.O2SV</span>
<span class="big yel" style="left:898.01px;top:563.00px;font-size:17px;line-height:17px;-webkit-text-stroke:0.2px #040404;transform-origin:0 14px;transform:scale(0.9479,1.045)">0.000</span>
<span class="big yel" style="left:938.07px;top:561.00px;font-size:21px;line-height:21px;font-weight:bold;-webkit-text-stroke:0.25px currentColor;transform-origin:0 18px;transform:scale(1.0691,1.045)">V</span>
<div style="left:0;top:593px;width:990px;height:1px;background:#c9c6b4"></div>
<div style="left:0;top:594px;width:990px;height:1px;background:#8c8a80"></div>
<div style="left:0;top:595px;width:990px;height:5px;background:#f1efe2"></div>
<div style="left:0;top:600px;width:990px;height:1px;background:#b0ad9d"></div>
<div style="left:0;top:601px;width:990px;height:18px;background:linear-gradient(#cbc8b7,#d9d6c7 50%,#eae8dc)"></div>
<div style="left:0;top:619px;width:990px;height:1px;background:#7e7c70"></div>
<span class="t" style="left:-0.68px;top:603px;transform:scaleX(0.9815);">Data Control Panel</span>
<svg style="left:974px;top:602px" width="16" height="14" viewBox="974 602 16 14"><path d="M979.500 605.500l8 7.500M987.500 605.500l-8 7.500" stroke="#000" stroke-width="1.500" fill="none"/></svg>
<div style="left:34px;top:630px;width:910px;height:8px;border:1px solid #000;background:#fff"></div>
<span class="t" style="left:8.18px;top:640px;transform:scaleX(1.0000);">0</span>
<span class="t" style="left:962.38px;top:640px;transform:scaleX(0.9956);">162</span>
<div style="left:33px;top:648px;width:911px;height:4px;border-radius:2px;background:linear-gradient(#a5a396 0 1px,#e4e1d4 1px 2px,#fff 2px)"></div>
<svg style="left:49px;top:640px" width="13" height="22" viewBox="49 640 13 22"><path d="M50.500 642q0-1.500 1.500-1.500h7q1.500 0 1.500 1.500v12l-5 5.500-5-5.500z" fill="#f3f3ef" stroke="#8c9c8c" stroke-width="1"/><path d="M51 642q0-1 1-1h7q1 0 1 1v1.500h-9z" fill="#31c131"/><path d="M51 654.500l4.500 5 4.500-5-4.500 3.500z" fill="#2aa82a" stroke="#2aa82a" stroke-width="1"/></svg>
<span class="t" style="left:8.20px;top:678px;transform:scaleX(1.0000);">Frame:</span>
<span class="t" style="left:52.01px;top:678px;transform:scaleX(1.0526);">3</span>
<span class="t" style="left:879.20px;top:678px;transform:scaleX(0.9208);">Time:</span>
<span class="t" style="left:913.97px;top:678px;transform:scaleX(1.0088);">00:00:01.109</span>
<div style="left:987px;top:699px;width:3px;height:9px;background:#1a4fd8"></div>
<div style="left:426px;top:672px;width:24px;height:22px;border:1px solid #7f9fd9;border-radius:3px;background:#fff"></div>
<div style="left:421px;top:698px;width:23px;height:3px;border:1px solid #7f9fd9;border-top:none;border-radius:0 0 3px 3px;background:#fff"></div>
<div style="left:521px;top:673px;width:1px;height:20px;background:#c0bdae"></div>
<div style="left:599px;top:673px;width:1px;height:20px;background:#c0bdae"></div>
<svg style="left:260px;top:670px" width="420" height="26" viewBox="260 670 420 26"><defs><linearGradient id="bb" x1="0" y1="0" x2="1" y2="0"><stop offset="0" stop-color="#1560d8"/><stop offset=".5" stop-color="#3d8df0"/><stop offset="1" stop-color="#0f4fc0"/></linearGradient><linearGradient id="gb" x1="0" y1="0" x2="1" y2="0"><stop offset="0" stop-color="#a8a8a0"/><stop offset=".5" stop-color="#d0d0c8"/><stop offset="1" stop-color="#a0a098"/></linearGradient><radialGradient id="c1" cx=".4" cy=".35" r=".7"><stop offset="0" stop-color="#e4e3da"/><stop offset="1" stop-color="#b4b3a8"/></radialGradient><radialGradient id="c2" cx=".4" cy=".35" r=".7"><stop offset="0" stop-color="#b0afa6"/><stop offset="1" stop-color="#85847c"/></radialGradient><linearGradient id="st" x1="0" y1="0" x2="1" y2="1"><stop offset="0" stop-color="#e8452a"/><stop offset=".5" stop-color="#f65a22"/><stop offset="1" stop-color="#ff8a20"/></linearGradient><linearGradient id="gp" x1="0" y1="0" x2="1" y2="1"><stop offset="0" stop-color="#fff"/><stop offset="1" stop-color="#c8f0b8"/></linearGradient></defs><g fill="url(#bb)"><rect x="269" y="676" width="5" height="14" rx="2"/><path d="M283 676v14l-8.500-7z"/><path d="M299 676v14l-7.500-7zM306.500 676v14l-7.500-7z"/><path d="M322.500 676v14l-8-7z"/><rect x="324" y="676" width="5.500" height="14" rx="2"/><rect x="453" y="676" width="5.500" height="14" rx="2"/><path d="M459.500 676v14l8.500-7z"/><path d="M476 676v14l7.500-7zM483.500 676v14l7.500-7z"/><path d="M499.500 676v14l8.500-7z"/><rect x="508.500" y="676" width="5.500" height="14" rx="2"/></g><circle cx="345" cy="683" r="5" fill="url(#c1)"/><circle cx="368" cy="683" r="5.200" fill="url(#c2)"/><rect x="385" y="676" width="5" height="14" rx="1.500" fill="url(#gb)"/><rect x="392" y="676" width="5" height="14" rx="1.500" fill="url(#gb)"/><path d="M408 676v14l13-7z" fill="#4ec238" stroke="#38a028" stroke-width=".8"/><rect x="431" y="676" width="15" height="14" rx="1.500" fill="url(#st)" stroke="#d83c20" stroke-width=".6"/><path d="M532 676.500h7.500l4.500 4.500v8.500h-12z" fill="url(#gp)" stroke="#1f9a1f" stroke-width="1.200"/><path d="M539.500 676.500v4.500h4.500" fill="none" stroke="#1f9a1f" stroke-width=".9"/><path d="M556.500 678l5.800-.500.700-1.300h3.800l.200 9-10.500 3.600z" fill="#6fd85c" stroke="#1f9a1f" stroke-width=".9"/><path d="M553.300 680.400l3.200-.400v8.800l-.800-.200z" fill="#c8f0b8" stroke="#1f9a1f" stroke-width=".8"/><path d="M578.500 676.500h11l1 1v11.500l-1 1h-10l-2-2v-10.500z" fill="#a9a9a5" stroke="#8c8c88" stroke-width=".8"/><rect x="580.500" y="677" width="8" height="6" fill="#ecece8"/><path d="M581.500 679h6M581.500 681h6" stroke="#b8b8b4" stroke-width=".8"/><rect x="581" y="685.500" width="7" height="4.500" fill="#d8d8d4"/><rect x="582.500" y="686.500" width="2" height="3" fill="#999"/><path d="M609 689v-11l2-2 7 6-3.500 1v6z" fill="#5cd04a" stroke="#49b83a" stroke-width=".6"/><path d="M615 684.500h3v-2.500h2.500v2.500h2.500v2.500h-2.500v2.500h-2.500v-2.500h-3z" fill="#1f9a1f" stroke="#107010" stroke-width=".5"/><path d="M632 686l6-3 6.500 2.500v2l-6 2.500-6.500-2.500z" fill="#e8e8e4" stroke="#a8a8a4" stroke-width=".6"/><path d="M638.500 676l4.500 5h-2.500v4h-4v-4h-2.500z" fill="#5cd04a" stroke="#38a028" stroke-width=".6"/><rect x="654" y="676.500" width="13.500" height="13" fill="#f4f6fa" stroke="#888c98" stroke-width="1"/><path d="M654 680.500h13.500M654 685h13.500M658 676.500v13M663.500 676.500v13" stroke="#a8acb8" stroke-width=".8"/><circle cx="661.500" cy="683" r="3.200" fill="#9cc0f4" stroke="#5a7ab0" stroke-width=".8"/><path d="M664 685.500l3 3" stroke="#f08020" stroke-width="2"/></svg>
</body></html>
